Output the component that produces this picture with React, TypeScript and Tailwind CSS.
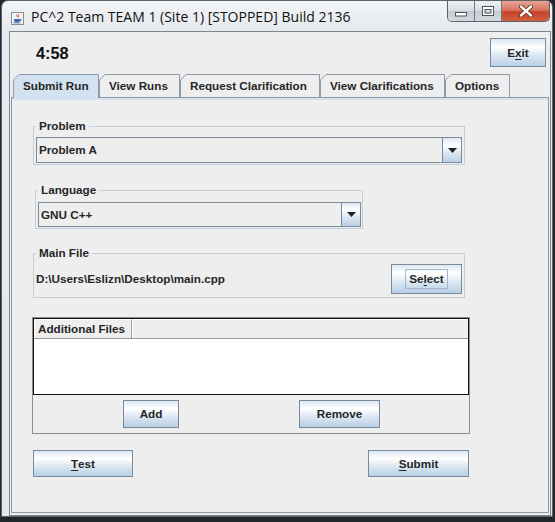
import React from "react"

type BoxProps = { children?: React.ReactNode; className?: string }

const metalGradient =
  "bg-[linear-gradient(to_bottom,#dde8f3_0%,#ffffff_30%,#dde8f3_60%,#b8cfe5_100%)]"

function MetalButton({ children, className = "" }: BoxProps) {
  return (
    <button
      type="button"
      className={
        "flex items-center justify-center border border-[#7a8a99] bg-[linear-gradient(to_bottom,#dde8f3_0%,#ffffff_30%,#dde8f3_60%,#b8cfe5_100%)] text-[11.7px] font-bold leading-[14px] text-[#262626] " +
        className
      }
    >
      {children}
    </button>
  )
}

function Combo({ value, className = "" }: { value: string; className?: string }) {
  return (
    <div className={"flex border border-[#7a8a99] bg-[#eeeeee] " + className}>
      <div className="flex flex-1 items-center pl-[2px] text-[11.7px] font-bold text-[#262626]">
        {value}
      </div>
      <div
        className={
          "flex w-[19px] items-center justify-center border-l border-[#7a8a99] " + metalGradient
        }
      >
        <svg width="9" height="5" viewBox="0 0 9 5">
          <path d="M0 0H9L4.5 5Z" fill="#222" />
        </svg>
      </div>
    </div>
  )
}

const tabs = [
  { label: "Submit Run", w: 86, cls: "w-[86px]" },
  { label: "View Runs", w: 81, cls: "w-[81px]" },
  { label: "Request Clarification", w: 140, cls: "w-[140px]" },
  { label: "View Clarifications", w: 125, cls: "w-[125px]" },
  { label: "Options", w: 65, cls: "w-[65px]" },
]

function Tab({ label, w, cls, selected }: { label: string; w: number; cls: string; selected: boolean }) {
  const h = selected ? 24 : 23
  return (
    <div className={"relative flex items-start " + cls + (selected ? " z-10 h-[24px]" : " h-[23px]")}>
      <svg className="absolute left-0 top-0" width={w} height={h}>
        <path
          d={`M0.5 ${h}V6L6 0.5H${w - 0.5}V${h}`}
          fill={selected ? "#d3e2f1" : "#eeeeee"}
          stroke="#8c9aa8"
        />
        {selected && <rect x="1" y={h - 1} width={w - 2} height="1" fill="#d3e2f1" />}
      </svg>
      <span className="relative flex h-[23px] items-center pl-[10px] text-[11.7px] font-bold leading-[14px] text-[#262626]">
        {label}
      </span>
    </div>
  )
}

function JavaIcon() {
  return (
    <svg width="13" height="13" viewBox="0 0 13 13">
      <rect x="0.5" y="0.5" width="12" height="12" fill="#f4f4f4" stroke="#8a8f96" />
      <path d="M6 2.5c-1 1 1 1.5 0 3M7.5 2.2c-1 1 1 1.5 0 3" stroke="#d0452b" fill="none" strokeWidth="0.9" />
      <path d="M3 7h6v1.6c0 1-1 1.6-3 1.6S3 9.6 3 8.6Z" fill="#3a6ab0" />
      <path d="M9 7.4h1.2v1.1H9" stroke="#3a6ab0" fill="none" strokeWidth="0.8" />
      <rect x="2.5" y="10.4" width="7" height="0.9" fill="#3a6ab0" />
    </svg>
  )
}

function TitleButtons() {
  return (
    <div className="mr-[2px] flex h-[21px] overflow-hidden rounded-b-[5px] border border-t-0 border-[#59616c]">
      <div className="flex w-[27px] items-center justify-center border-r border-[#6d7580] bg-[linear-gradient(to_bottom,#eef0f3_0%,#d8dce2_50%,#c5cad2_51%,#d4d9df_100%)]">
        <svg width="12" height="6" viewBox="0 0 12 6" className="mt-[5px]">
          <rect x="0.5" y="1.5" width="11" height="3.5" fill="#fff" stroke="#4a525c" />
        </svg>
      </div>
      <div className="flex w-[27px] items-center justify-center border-r border-[#6d7580] bg-[linear-gradient(to_bottom,#eef0f3_0%,#d8dce2_50%,#c5cad2_51%,#d4d9df_100%)]">
        <svg width="12" height="10" viewBox="0 0 12 10">
          <rect x="0.5" y="0.5" width="11" height="9" fill="#fff" stroke="#4a525c" />
          <rect x="3" y="3.5" width="6" height="3.5" fill="#d4d9df" stroke="#4a525c" />
        </svg>
      </div>
      <div className="flex w-[47px] items-center justify-center bg-[linear-gradient(to_bottom,#e8a494_0%,#d77560_45%,#c5432a_55%,#d2603f_100%)]">
        <svg width="14" height="12" viewBox="0 0 14 12">
          <path d="M2 1.5L12 10.5M12 1.5L2 10.5" stroke="#5a2418" strokeWidth="4" strokeLinecap="round" />
          <path d="M2 1.5L12 10.5M12 1.5L2 10.5" stroke="#ffffff" strokeWidth="2.4" strokeLinecap="round" />
        </svg>
      </div>
    </div>
  )
}

export default function App() {
  return (
    <div className="h-[522px] w-[555px] overflow-hidden bg-[#22252a] font-['Liberation_Sans',Arial,sans-serif]">
      <div className="ml-[1px] flex h-[517px] w-[552px] flex-col rounded-t-[7px] border border-[#5d636b] bg-[linear-gradient(to_bottom,#f2f4f6_0px,#e6e9ed_30px,#e4e7eb_100%)]">
        {/* title bar */}
        <div className="flex h-[30px] items-start">
          <div className="ml-[9px] mt-[11px]">
            <JavaIcon />
          </div>
          <span className="ml-[7px] mt-[6px] font-['Open_Sans',sans-serif] text-[14px] leading-[19px] text-[#111111]">
            PC^2 Team TEAM 1 (Site 1) [STOPPED] Build 2136
          </span>
          <div className="ml-auto">
            <TitleButtons />
          </div>
        </div>

        {/* client area */}
        <div className="ml-[7px] mr-[1px] flex flex-1 flex-col border border-[#7d8691] bg-[#eeeeee]">
          <div className="flex h-[42px] items-start justify-between">
            <span className="ml-[26px] mt-[11px] text-[16.3px] font-bold leading-[20px] text-[#111111]">4:58</span>
            <MetalButton className="mr-[4px] mt-[6px] h-[29px] w-[56px]">
              E<span className="underline underline-offset-2">x</span>it
            </MetalButton>
          </div>

          <div className="ml-[3px] flex h-[23px] items-start">
            {tabs.map((t, i) => (
              <Tab key={t.label} label={t.label} w={t.w} cls={t.cls} selected={i === 0} />
            ))}
          </div>

          <div className="mx-[1px] mb-[2px] flex flex-1 flex-col border border-[#8c9aa8] text-[#262626]">
            <div className="h-[2px] bg-[#d3e2f1]" />

            <fieldset className="ml-[21px] mt-[19px] w-[432px] border border-[#c4ced8] p-0">
              <legend className="ml-[2px] px-[3px] text-[11.7px] font-bold leading-[14px]">Problem</legend>
              <Combo className="mx-[2px] mb-[1px] mt-[4px] h-[26px]" value="Problem A" />
            </fieldset>

            <fieldset className="ml-[23px] mt-[18px] w-[328px] border border-[#c4ced8] p-0">
              <legend className="ml-[2px] px-[3px] text-[11.7px] font-bold leading-[14px]">Language</legend>
              <Combo className="mb-[1px] ml-[2px] mr-[1px] mt-[5px] h-[25px]" value="GNU C++" />
            </fieldset>

            <fieldset className="ml-[21px] mt-[17px] w-[432px] border border-[#c4ced8] p-0">
              <legend className="ml-[2px] px-[3px] text-[11.7px] font-bold leading-[14px]">Main File</legend>
              <div className="mx-[2px] mb-[3px] mt-[4px] flex items-center justify-between">
                <span className="text-[11.7px] font-bold">D:\Users\Eslizn\Desktop\main.cpp</span>
                <MetalButton className="h-[30px] w-[71px]">
                  <span className="border border-[#a3b8cc] px-[3px] py-[2px]">
                    Se<span className="underline underline-offset-2">l</span>ect
                  </span>
                </MetalButton>
              </div>
            </fieldset>

            <div className="ml-[20px] mt-[19px] flex h-[117px] w-[438px] flex-col border border-[#8e8e8e]">
              <div className="flex h-[77px] flex-col border border-[#111111] bg-white">
                <div className="flex h-[20px] border-b border-[#9a9a9a] bg-[#eeeeee]">
                  <div className="flex w-[98px] items-center border-r border-[#9a9a9a] border-l border-t border-l-white border-t-white pl-[3px] text-[11.7px] font-bold">
                    Additional Files
                  </div>
                  <div className="flex-1 border-l border-t border-l-white border-t-white" />
                </div>
              </div>
              <div className="mt-[5px] flex">
                <MetalButton className="ml-[90px] h-[28px] w-[56px]">Add</MetalButton>
                <MetalButton className="ml-[120px] h-[28px] w-[81px]">Remove</MetalButton>
              </div>
            </div>

            <div className="mt-[16px] flex">
              <MetalButton className="ml-[21px] h-[27px] w-[100px]">
                <span className="underline underline-offset-2">T</span>est
              </MetalButton>
              <MetalButton className="ml-[235px] h-[27px] w-[101px]">
                <span className="underline underline-offset-2">S</span>ubmit
              </MetalButton>
            </div>
          </div>
        </div>
      </div>
    </div>
  )
}
